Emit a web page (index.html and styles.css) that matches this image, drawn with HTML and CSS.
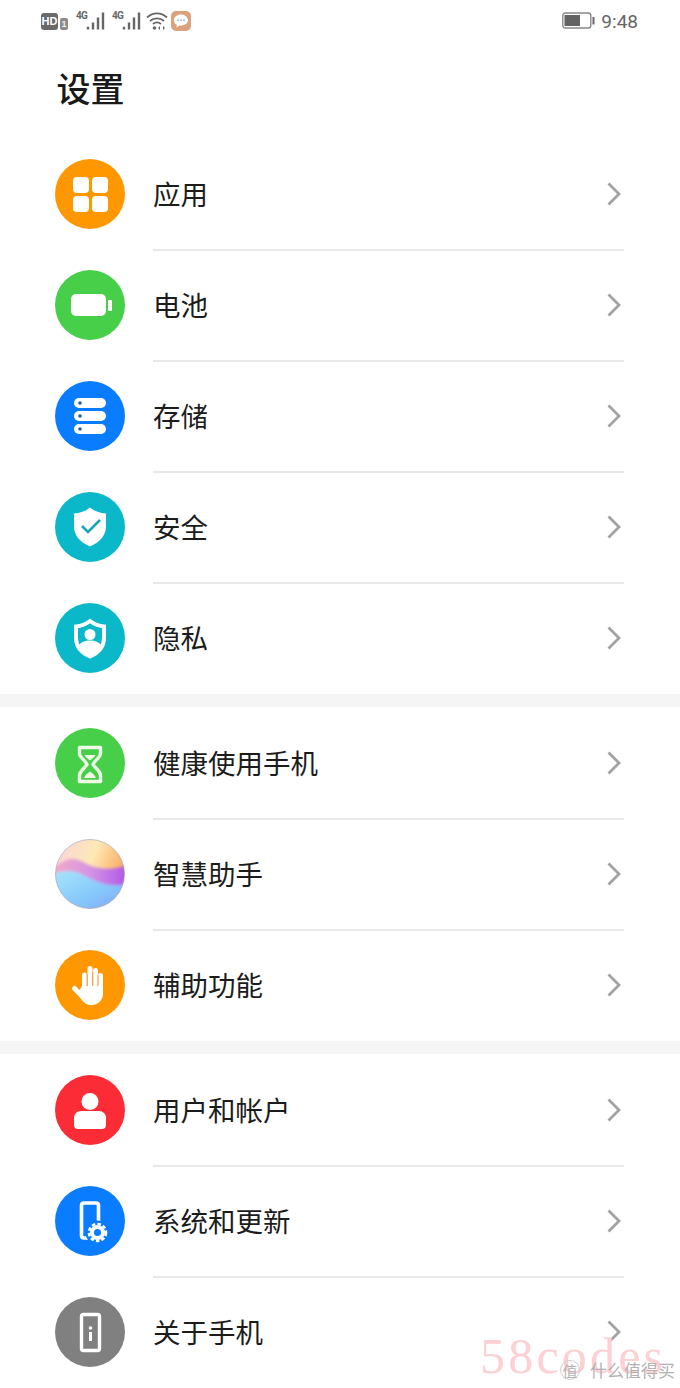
FILE: index.html
```html
<!DOCTYPE html>
<html lang="zh-CN">
<head>
<meta charset="utf-8">
<title>设置</title>
<link rel="stylesheet" href="styles.css">
</head>
<body>
<div class="page">
  <div class="status">
    <div class="status-left">
      <span class="hd">HD</span><span class="sim">1</span>
      <span class="net"><span class="g4">4G</span><svg class="bars" width="20" height="20" viewBox="0 0 20 20"><path d="M2 15.800v2.700M7 11.500v7M12 6.500v12M17 1.500v17" stroke="#666" stroke-width="2.400" fill="none"/></svg></span>
      <span class="net second"><span class="g4">4G</span><svg class="bars" width="20" height="20" viewBox="0 0 20 20"><path d="M2 15.800v2.700M7 11.500v7M12 6.500v12M17 1.500v17" stroke="#666" stroke-width="2.400" fill="none"/></svg></span>
      <svg class="wifi" width="22" height="20" viewBox="0 0 22 20"><path d="M1 6.500C7 1 15 1 21 6.500M4 10C8 6.500 14 6.500 18 10M7 13c2.500-2 5.500-2 8 0" stroke="#666" stroke-width="1.800" fill="none"/><circle cx="8.500" cy="17" r="1.800" fill="#666"/><path d="M14 15l-2 2 2 2zM17 15l2 2-2 2z" fill="#666"/></svg>
      <svg class="msg" width="20" height="20" viewBox="0 0 20 20"><rect width="20" height="20" rx="5" fill="#dba27e"/><path d="M10 3.500c-4 0-7 2.500-7 5.800 0 2 1.100 3.500 2.800 4.500l-.3 2.700 3-2c.5.100 1 .100 1.500.100 4 0 7-2.500 7-5.300S14 3.500 10 3.500z" fill="#fff"/><circle cx="7" cy="9.200" r="1" fill="#9cc4e4"/><circle cx="10" cy="9.200" r="1" fill="#9cc4e4"/><circle cx="13" cy="9.200" r="1" fill="#9cc4e4"/></svg>
    </div>
    <div class="status-right">
      <svg width="33" height="18" viewBox="0 0 33 18"><rect x=".8" y="1" width="28" height="15" rx="2.500" fill="#fff" stroke="#888" stroke-width="1.400"/><rect x="2.500" y="3" width="15.500" height="11" fill="#636363"/><rect x="30.500" y="5" width="2" height="7.500" fill="#666"/></svg>
      <span class="time">9:48</span>
    </div>
  </div>

  <h1 class="title">设置</h1>

  <ul class="group">
    <li class="row">
      <svg class="icon" viewBox="0 0 70 70"><circle cx="35" cy="35" r="35" fill="#ff9800"/><rect x="18" y="18" width="16" height="16" rx="4" fill="#fff"/><rect x="37" y="18" width="16" height="16" rx="4" fill="#fff"/><rect x="18" y="37" width="16" height="16" rx="4" fill="#fff"/><rect x="37" y="37" width="16" height="16" rx="4" fill="#fff"/></svg>
      <div class="row-body"><span class="label">应用</span><svg class="chev" width="16" height="26" viewBox="0 0 16 26"><path d="M2.500 2.500L13 13 2.500 23.500" fill="none" stroke="#a2a2a2" stroke-width="2.800"/></svg></div>
    </li>
    <li class="row">
      <svg class="icon" viewBox="0 0 70 70"><circle cx="35" cy="35" r="35" fill="#47cf4a"/><rect x="16" y="24" width="35" height="22" rx="5" fill="#fff"/><rect x="53" y="30" width="4" height="11" rx="1" fill="#fff"/></svg>
      <div class="row-body"><span class="label">电池</span><svg class="chev" width="16" height="26" viewBox="0 0 16 26"><path d="M2.500 2.500L13 13 2.500 23.500" fill="none" stroke="#a2a2a2" stroke-width="2.800"/></svg></div>
    </li>
    <li class="row">
      <svg class="icon" viewBox="0 0 70 70"><circle cx="35" cy="35" r="35" fill="#0a7cff"/><rect x="19" y="17" width="32" height="10" rx="5" fill="#fff"/><rect x="19" y="30" width="32" height="10" rx="5" fill="#fff"/><rect x="19" y="43" width="32" height="10" rx="5" fill="#fff"/><circle cx="25" cy="22" r="1.800" fill="#2b5c99"/><circle cx="25" cy="35" r="1.800" fill="#2b5c99"/><circle cx="25" cy="48" r="1.800" fill="#2b5c99"/></svg>
      <div class="row-body"><span class="label">存储</span><svg class="chev" width="16" height="26" viewBox="0 0 16 26"><path d="M2.500 2.500L13 13 2.500 23.500" fill="none" stroke="#a2a2a2" stroke-width="2.800"/></svg></div>
    </li>
    <li class="row">
      <svg class="icon" viewBox="0 0 70 70"><circle cx="35" cy="35" r="35" fill="#0ab8ca"/><path d="M35 15.500c4 3.500 10 5.500 16 6v13c0 9-6.500 16-16 20-9.500-4-16-11-16-20v-13c6-.5 12-2.500 16-6z" fill="#fff"/><path d="M27 34l6 6 12-12" fill="none" stroke="#1aa5b8" stroke-width="2.600"/></svg>
      <div class="row-body"><span class="label">安全</span><svg class="chev" width="16" height="26" viewBox="0 0 16 26"><path d="M2.500 2.500L13 13 2.500 23.500" fill="none" stroke="#a2a2a2" stroke-width="2.800"/></svg></div>
    </li>
    <li class="row">
      <svg class="icon" viewBox="0 0 70 70"><circle cx="35" cy="35" r="35" fill="#0ab8ca"/><path d="M35 18c4 3 9 5 14 5.500v11.500c0 8.500-6 15-14 18.500-8-3.500-14-10-14-18.500v-11.500c5-.5 10-2.500 14-5.500z" fill="none" stroke="#fff" stroke-width="4"/><circle cx="35" cy="31.500" r="5.500" fill="#fff"/><path d="M23 43c3-4 7-5.500 12-5.500s9 1.500 12 5.500c-2 4-6 8-12 10.500-6-2.500-10-6.500-12-10.500z" fill="#fff"/></svg>
      <div class="row-body"><span class="label">隐私</span><svg class="chev" width="16" height="26" viewBox="0 0 16 26"><path d="M2.500 2.500L13 13 2.500 23.500" fill="none" stroke="#a2a2a2" stroke-width="2.800"/></svg></div>
    </li>
  </ul>

  <ul class="group">
    <li class="row">
      <svg class="icon" viewBox="0 0 70 70"><circle cx="35" cy="35" r="35" fill="#47cf4a"/><path d="M24.500 19.500h21v6c0 4-5.500 6.500-7.500 11 2 3.500 7.500 6.500 7.500 11v6h-21v-6c0-4.500 5.500-7.500 7.500-11-2-4.500-7.500-7-7.500-11z" fill="none" stroke="#eefae6" stroke-width="3.400" stroke-linejoin="round"/><path d="M29.500 27h11c-1 2.500-3.500 3.500-5.500 5.500-2-2-4.500-3-5.500-5.500zM29 50c1-3 4-5 6-6.500 2 1.500 5 3.500 6 6.500z" fill="#eefae6"/></svg>
      <div class="row-body"><span class="label">健康使用手机</span><svg class="chev" width="16" height="26" viewBox="0 0 16 26"><path d="M2.500 2.500L13 13 2.500 23.500" fill="none" stroke="#a2a2a2" stroke-width="2.800"/></svg></div>
    </li>
    <li class="row">
      <svg class="icon" viewBox="0 0 70 70"><defs><linearGradient id="ballTop" x1="0" y1="0" x2="1" y2="0.400"><stop offset="0" stop-color="#fbd0e0"/><stop offset=".55" stop-color="#fde9b4"/><stop offset="1" stop-color="#f9a860"/></linearGradient><linearGradient id="ballMid" x1="0" y1="0" x2="1" y2="0"><stop offset="0" stop-color="#f9a6c4"/><stop offset=".5" stop-color="#d08ee8"/><stop offset="1" stop-color="#a94cf6"/></linearGradient><linearGradient id="ballLow" x1="0" y1="0" x2="1" y2="1"><stop offset="0" stop-color="#a8e6fb"/><stop offset=".55" stop-color="#86c8fc"/><stop offset="1" stop-color="#7f9ffa"/></linearGradient><clipPath id="ballClip"><circle cx="35" cy="35" r="34.500"/></clipPath><filter id="ballBlur" x="-10%" y="-10%" width="120%" height="120%"><feGaussianBlur stdDeviation="1.500"/></filter></defs><g clip-path="url(#ballClip)"><rect width="70" height="70" fill="url(#ballTop)"/><g filter="url(#ballBlur)"><path d="M-4 30c12-8 20-14 32-7s28 10 46 2v26H-4z" fill="url(#ballMid)" opacity=".92"/><path d="M-4 36c10-4 20-6 30-1s26 15 48 10v28H-4z" fill="url(#ballLow)"/></g></g><circle cx="35" cy="35" r="34.500" fill="none" stroke="#a9a9b8" stroke-width="1" opacity=".7"/></svg>
      <div class="row-body"><span class="label">智慧助手</span><svg class="chev" width="16" height="26" viewBox="0 0 16 26"><path d="M2.500 2.500L13 13 2.500 23.500" fill="none" stroke="#a2a2a2" stroke-width="2.800"/></svg></div>
    </li>
    <li class="row">
      <svg class="icon" viewBox="0 0 70 70"><circle cx="35" cy="35" r="35" fill="#ff9800"/><path d="M29.500 25v14M35 18.500v20M40.500 20.500v18M45.500 25.500v14" stroke="#fff" stroke-width="5" stroke-linecap="round" fill="none"/><path d="M19.500 38.500l8 8" stroke="#fff" stroke-width="5" stroke-linecap="round" fill="none"/><path d="M27 36h21v8c0 6-5 11-11 11-5 0-8-2-10-5l-5-6z" fill="#fff"/><path d="M32.200 24v12M37.700 22v14M43 25v11" stroke="#eea94f" stroke-width="1.300" fill="none"/></svg>
      <div class="row-body"><span class="label">辅助功能</span><svg class="chev" width="16" height="26" viewBox="0 0 16 26"><path d="M2.500 2.500L13 13 2.500 23.500" fill="none" stroke="#a2a2a2" stroke-width="2.800"/></svg></div>
    </li>
  </ul>

  <ul class="group">
    <li class="row">
      <svg class="icon" viewBox="0 0 70 70"><circle cx="35" cy="35" r="35" fill="#fb2c36"/><circle cx="35" cy="26.500" r="8.500" fill="#fff"/><path d="M19 43c0-4 3-7 7-7h18c4 0 7 3 7 7v7c0 2.500-1.500 4-4 4H23c-2.500 0-4-1.500-4-4z" fill="#fff"/></svg>
      <div class="row-body"><span class="label">用户和帐户</span><svg class="chev" width="16" height="26" viewBox="0 0 16 26"><path d="M2.500 2.500L13 13 2.500 23.500" fill="none" stroke="#a2a2a2" stroke-width="2.800"/></svg></div>
    </li>
    <li class="row">
      <svg class="icon" viewBox="0 0 70 70"><circle cx="35" cy="35" r="35" fill="#0a7cff"/><path d="M33 52h-4c-2 0-2.500-1-2.500-2.500v-30c0-1.500.5-2.500 2.500-2.500h12c2 0 2.500 1 2.500 2.500v17" fill="none" stroke="#fff" stroke-width="3.600"/><circle cx="42.500" cy="46.500" r="12" fill="#0a7cff"/><circle cx="42.500" cy="46.500" r="5.500" fill="none" stroke="#fff" stroke-width="4"/><circle cx="42.500" cy="46.500" r="8.500" fill="none" stroke="#fff" stroke-width="2.600" stroke-dasharray="3.500 2.170"/></svg>
      <div class="row-body"><span class="label">系统和更新</span><svg class="chev" width="16" height="26" viewBox="0 0 16 26"><path d="M2.500 2.500L13 13 2.500 23.500" fill="none" stroke="#a2a2a2" stroke-width="2.800"/></svg></div>
    </li>
    <li class="row">
      <svg class="icon" viewBox="0 0 70 70"><circle cx="35" cy="35" r="35" fill="#808080"/><rect x="26.500" y="17.500" width="18" height="36" rx="2" fill="none" stroke="#fff" stroke-width="3.400"/><circle cx="35.500" cy="31" r="1.800" fill="#fff"/><rect x="34" y="35" width="3" height="9" fill="#fff"/></svg>
      <div class="row-body"><span class="label">关于手机</span><svg class="chev" width="16" height="26" viewBox="0 0 16 26"><path d="M2.500 2.500L13 13 2.500 23.500" fill="none" stroke="#a2a2a2" stroke-width="2.800"/></svg></div>
    </li>
  </ul>

  <div class="mark">58codes</div>
  <div class="credit"><span class="credit-logo">值</span><span class="credit-text">什么值得买</span></div>
</div>
</body>
</html>
```
FILE: styles.css
```css
* { box-sizing: border-box; }
html, body { margin: 0; padding: 0; background: #fff; }
body { font-family: "Noto Sans CJK SC", "Noto Sans", sans-serif; color: #1c1c1c; }
.page { position: relative; width: 680px; height: 1388px; overflow: hidden; background: #fff; }

.status { display: flex; justify-content: space-between; align-items: center; height: 42px; padding: 0 42px 0 41px; }
.status-left { display: flex; align-items: center; }
.status-right { display: flex; align-items: center; gap: 6px; }
.hd { width: 17px; height: 17px; border-radius: 3px; background: #6a6a6a; color: #fff; font: bold 11px/17px "Liberation Sans", sans-serif; text-align: center; }
.sim { width: 8px; height: 12px; margin-left: 2px; margin-top: 5px; border-radius: 2px; background: #8c8c8c; color: #eee; font: bold 9px/12px "Liberation Sans", sans-serif; text-align: center; }
.net { display: flex; align-items: flex-end; margin-left: 8px; height: 20px; width: 30px; }
.second { margin-left: 6px; }
.g4 { font: bold 10px/10px "Roboto", sans-serif; color: #666; align-self: flex-start; margin-top: 0; width: 10px; flex: none; letter-spacing: -.8px; }
.bars { flex: none; }
.wifi { margin-left: 4px; }
.msg { margin-left: 3px; }
.time { font: 400 19px/22px "Roboto", sans-serif; color: #666; margin-top: 1px; }

.title { margin: 0; padding: 21px 0 0 56.5px; height: 97px; font-size: 34px; line-height: 50px; font-weight: 500; color: #1a1a1a; }

.group { list-style: none; margin: 0 0 1px; padding: 0; border-bottom: 13px solid #f5f5f5; }
.group:last-of-type { border-bottom: 0; margin-bottom: 0; }
.row { display: flex; align-items: flex-start; height: 111px; padding-left: 55px; }
.icon { width: 70px; height: 70px; flex: none; margin-top: 20px; display: block; }
.row-body { flex: none; width: 471px; height: 112px; margin-left: 28px; display: flex; align-items: center; justify-content: space-between; padding-right: 2px; border-bottom: 2px solid #e8e8e8; }
.row:last-child .row-body { border-bottom-color: transparent; }
.label { font-size: 27.5px; line-height: 40px; color: #1c1c1c; margin-top: -2px; }
.chev { display: block; }

.mark { position: absolute; left: 480px; top: 1328px; font: 400 50px/56px "Liberation Serif", serif; letter-spacing: 3.200px; color: #fdd0d4; white-space: nowrap; }
.credit { position: absolute; left: 560px; top: 1358px; display: flex; align-items: center; gap: 10px; color: #b2b2b2; }
.credit-logo { width: 20px; height: 20px; font-size: 15px; line-height: 20px; text-align: center; border-radius: 50%; border: 1px solid #cfcfcf; }
.credit-text { font-size: 17px; line-height: 24px; white-space: nowrap; }
```
